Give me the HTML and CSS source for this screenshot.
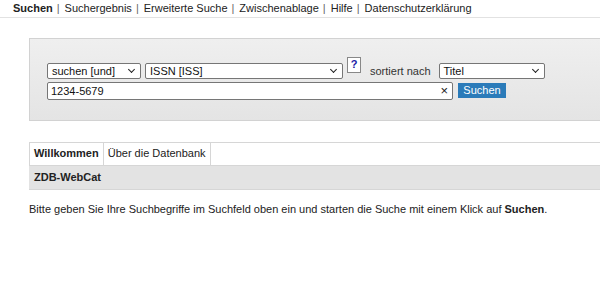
FILE: index.html
```html
<!DOCTYPE html>
<html lang="de">
<head>
    <meta charset="UTF-8">
    <title>ZDB-WebCat</title>
    <link rel="stylesheet" href="styles.css">
</head>
<body>
    <!-- Top navigation -->
    <div class="topnav">
        <a href="#" class="active">Suchen</a><span class="sep">|</span><a href="#">Suchergebnis</a><span class="sep">|</span><a href="#">Erweiterte Suche</a><span class="sep">|</span><a href="#">Zwischenablage</a><span class="sep">|</span><a href="#">Hilfe</a><span class="sep">|</span><a href="#">Datenschutzerklärung</a>
    </div>

    <!-- Search box -->
    <div class="searchbox">
        <div class="row">
            <div class="sel sel-act">suchen [und]<span class="arrow"></span></div>
            <div class="sel sel-key">ISSN [ISS]<span class="arrow"></span></div>
            <a href="#" class="help">?</a>
            <span class="sortlabel">sortiert nach</span>
            <div class="sel sel-sort">Titel<span class="arrow"></span></div>
        </div>
        <div class="row">
            <div class="term">1234-5679<span class="clear">&times;</span></div>
            <button type="button" class="go">Suchen</button>
        </div>
    </div>

    <!-- Tabs -->
    <div class="tabs">
        <div class="tabbar">
            <div class="tab active">Willkommen</div>
            <div class="tab">Über die Datenbank</div>
            <div class="tabrest"></div>
        </div>
        <div class="tabhead">ZDB-WebCat</div>
    </div>

    <p class="intro">Bitte geben Sie Ihre Suchbegriffe im Suchfeld oben ein und starten die Suche mit einem Klick auf <b>Suchen</b>.</p>
</body>
</html>
```
FILE: styles.css
```css
body { margin: 0; font-family: "Liberation Sans", Arial, sans-serif; font-size: 12px; color: #222; background: #fff; overflow: hidden; }
a { color: #222; text-decoration: none; }

.topnav { height: 17px; border-bottom: 1px solid #e2e2e2; padding-left: 13px; font-size: 11px; line-height: 16px; white-space: nowrap; }
.topnav a.active { font-weight: bold; }
.topnav .sep { color: #666; margin: 0 5px 0 4px; }

.searchbox { margin: 20px 0 0 29px; height: 83px; border: 1px solid #d2d2d2; border-right: none; background: linear-gradient(#efefef, #e4e4e4); padding: 0 0 0 17px; box-sizing: border-box; }
.row { display: flex; align-items: center; height: 19px; }
.row:first-child { margin-top: 22px; }
.row + .row { margin-top: 1px; }

.sel { position: relative; box-sizing: border-box; height: 16px; border: 1px solid #767676; border-radius: 2px; background: #fff; font-size: 11px; line-height: 14px; padding-left: 4px; color: #111; }
.sel .arrow { position: absolute; right: 6px; top: 3px; width: 4px; height: 4px; border-right: 1.5px solid #222; border-bottom: 1.5px solid #222; transform: rotate(45deg); }
.sel-act { width: 94px; }
.sel-key { width: 198px; margin-left: 4px; }
.sel-sort { width: 106px; margin-left: 8px; }

.help { align-self: flex-start; box-sizing: border-box; width: 14px; height: 16px; margin: -4px 0 0 4px; border: 1px solid #888; background: #fff; color: #1a1aa6; font-weight: bold; font-size: 11px; line-height: 12px; text-align: center; }
.sortlabel { margin-left: 9px; font-size: 11px; color: #333; }

.term { position: relative; box-sizing: border-box; width: 406px; height: 18px; border: 1px solid #767676; border-radius: 2px; background: #fff; font-size: 11px; line-height: 16px; padding-left: 3px; color: #111; }
.term .clear { position: absolute; right: 4px; top: 0; font-size: 13px; line-height: 16px; color: #222; }
.go { margin-left: 5px; height: 15px; width: 48px; padding: 0; border: none; background: #2b7bb9; color: #fff; font-family: inherit; font-size: 11px; line-height: 15px; }

.tabs { margin: 21px 0 0 29px; }
.tabbar { display: flex; height: 22px; border-top: 1px solid #d6d6d6; }
.tab { padding: 0 4px; line-height: 21px; font-size: 11px; border-left: 1px solid #d6d6d6; border-right: 1px solid #d6d6d6; margin-right: -1px; background: #fff; }
.tab.active { font-weight: bold; }
.tabrest { flex: 1; }
.tabhead { height: 23px; line-height: 23px; padding-left: 5px; background: #e3e3e3; border-top: 1px solid #d6d6d6; border-bottom: 1px solid #d6d6d6; font-weight: bold; font-size: 11px; }

.intro { margin: 13px 0 0 29px; font-size: 11px; color: #222; }
```
